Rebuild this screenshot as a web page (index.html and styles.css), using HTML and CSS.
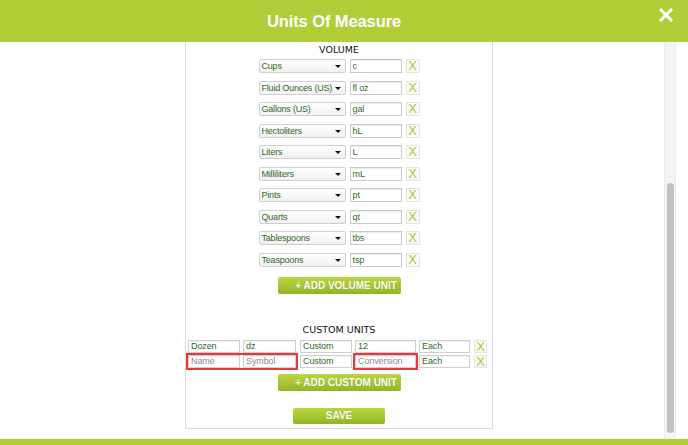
FILE: index.html
```html
<!DOCTYPE html>
<html>
<head>
<meta charset="utf-8">
<link rel="stylesheet" href="styles.css">
</head>
<body>
<header class="topbar">
  <h1 class="title">Units Of Measure</h1>
  <span class="close" aria-label="Close">
    <svg width="14" height="14" viewBox="0 0 14 14"><path d="M2 2 L12 12 M12 2 L2 12" stroke="#fff" stroke-width="3" stroke-linecap="square"/></svg>
  </span>
</header>
<main class="main">
  <section class="panel">
    <h2 class="heading vol-heading">VOLUME</h2>
    <div class="rows">
      <div class="row"><div class="select">Cups<span class="caret"></span></div><div class="input">c</div><div class="xbtn">X</div></div>
      <div class="row"><div class="select">Fluid Ounces (US)<span class="caret"></span></div><div class="input">fl oz</div><div class="xbtn">X</div></div>
      <div class="row"><div class="select">Gallons (US)<span class="caret"></span></div><div class="input">gal</div><div class="xbtn">X</div></div>
      <div class="row"><div class="select">Hectoliters<span class="caret"></span></div><div class="input">hL</div><div class="xbtn">X</div></div>
      <div class="row"><div class="select">Liters<span class="caret"></span></div><div class="input">L</div><div class="xbtn">X</div></div>
      <div class="row"><div class="select">Milliliters<span class="caret"></span></div><div class="input">mL</div><div class="xbtn">X</div></div>
      <div class="row"><div class="select">Pints<span class="caret"></span></div><div class="input">pt</div><div class="xbtn">X</div></div>
      <div class="row"><div class="select">Quarts<span class="caret"></span></div><div class="input">qt</div><div class="xbtn">X</div></div>
      <div class="row"><div class="select">Tablespoons<span class="caret"></span></div><div class="input">tbs</div><div class="xbtn">X</div></div>
      <div class="row"><div class="select">Teaspoons<span class="caret"></span></div><div class="input">tsp</div><div class="xbtn">X</div></div>
    </div>
    <div class="btn-wrap"><div class="btn btn-add">+ ADD VOLUME UNIT</div></div>
    <h2 class="heading custom-heading">CUSTOM UNITS</h2>
    <div class="crows">
      <div class="crow">
        <div class="cin w52">Dozen</div><div class="cin w53">dz</div><div class="cin w52 ml4">Custom</div><div class="cin w61">12</div><div class="cin w51">Each</div><div class="xbtn cx">X</div>
      </div>
      <div class="crow">
        <div class="mark pair"><div class="cin w52 ph">Name</div><div class="cin w53 ph">Symbol</div></div><div class="cin w52 ml4">Custom</div><div class="mark"><div class="cin w61 ph">Conversion</div></div><div class="cin w51">Each</div><div class="xbtn cx">X</div>
      </div>
    </div>
    <div class="btn-wrap cbtn"><div class="btn btn-add">+ ADD CUSTOM UNIT</div></div>
    <div class="btn-wrap sbtn"><div class="btn btn-save">SAVE</div></div>
  </section>
  <div class="track"><div class="thumb"></div></div>
</main>
<footer class="bottombar"></footer>
</body>
</html>
```
FILE: styles.css
```css
* { box-sizing: border-box; }
html, body { margin: 0; padding: 0; }
body {
  width: 688px;
  height: 445px;
  overflow: hidden;
  background: #fff;
  font-family: "Liberation Sans", Arial, sans-serif;
}
.topbar {
  height: 42px;
  background: #b1cd37;
  display: flex;
  align-items: center;
  justify-content: center;
  position: relative;
  padding-right: 20px;
}
.title {
  margin: 0;
  color: #fff;
  font-size: 16.5px;
  font-weight: bold;
  letter-spacing: -0.1px;
}
.close {
  position: absolute;
  left: 659px;
  top: 8px;
  width: 14px;
  height: 14px;
  display: block;
}
.close svg { display: block; }
.main {
  height: 397px;
  position: relative;
  overflow: hidden;
}
.panel {
  margin-left: 185px;
  width: 308px;
  height: 387px;
  border: 1px solid #dcdcdc;
  border-top: none;
  display: flex;
  flex-direction: column;
  align-items: center;
}
.heading {
  margin: 0;
  font-family: "DejaVu Sans", Verdana, sans-serif;
  font-weight: normal;
  font-size: 9.5px;
  color: #111;
  line-height: 12px;
}
.vol-heading { margin-top: 2px; }
.rows {
  margin-top: 3px;
  display: flex;
  flex-direction: column;
  gap: 7.5px;
}
.row {
  display: flex;
  align-items: center;
  height: 14px;
}
.select {
  width: 87px;
  height: 14px;
  border: 1px solid #cfcfcf;
  border-radius: 2px;
  background: linear-gradient(#ffffff, #f1f1f1);
  color: #2f6a22;
  font-size: 9px;
  letter-spacing: -0.2px;
  line-height: 12px;
  padding-left: 2px;
  position: relative;
  white-space: nowrap;
}
.caret {
  position: absolute;
  right: 4px;
  top: 5px;
  width: 0;
  height: 0;
  border-left: 3.5px solid transparent;
  border-right: 3.5px solid transparent;
  border-top: 3.5px solid #111;
}
.input {
  width: 52px;
  height: 14px;
  margin-left: 4px;
  border: 1px solid #c9c9c9;
  background: #fff;
  color: #2f6a22;
  font-size: 9px;
  letter-spacing: -0.1px;
  line-height: 12px;
  padding-left: 2px;
  box-shadow: inset 0 1px 1px rgba(0,0,0,0.08);
}
.xbtn {
  width: 14px;
  height: 14px;
  margin-left: 4px;
  border: 1px solid #e4e4e4;
  background: #fafafa;
  color: #a8c934;
  font-size: 13px;
  line-height: 12px;
  text-align: center;
}
.btn-wrap { display: flex; justify-content: center; }
.rows + .btn-wrap { margin-top: 10.5px; }
.btn {
  height: 17px;
  color: #fff;
  font-weight: bold;
  font-size: 10px;
  line-height: 17px;
  text-align: center;
  border-radius: 2px;
  background: linear-gradient(#b9d640, #a4c431 60%, #93b327);
  text-shadow: 0 0 1px rgba(60,80,0,0.4);
}
.btn-add { width: 123px; padding-left: 14px; }
.custom-heading { margin-top: 30px; }
.crows {
  margin-top: 4px;
  display: flex;
  flex-direction: column;
  gap: 2px;
  width: 300px;
  margin-left: -2px;
}
.crow {
  display: flex;
  align-items: center;
  height: 13px;
}
.cin {
  height: 13px;
  border: 1px solid #cfcfcf;
  background: #fff;
  color: #2f6a22;
  font-size: 9px;
  letter-spacing: -0.1px;
  line-height: 11px;
  padding-left: 2px;
  margin-right: 3px;
  box-shadow: inset 0 1px 1px rgba(0,0,0,0.06);
}
.cin.ph { color: #8a8a8a; }
.w52 { width: 52px; }
.w53 { width: 53px; }
.w61 { width: 61px; }
.w51 { width: 51px; }
.ml4 { margin-left: 1px; }
.cx { margin-left: 1px; width: 13px; height: 13px; line-height: 11px; }
.mark {
  display: flex;
  outline: 2px solid #e5383b;
  outline-offset: 0;
  margin-right: 3px;
}
.mark .cin:last-child { margin-right: 0; }
.pair .cin:first-child { margin-right: 3px; }
.cbtn { margin-top: 6px; }
.sbtn { margin-top: 17px; }
.btn-save { width: 92px; height: 16px; line-height: 16px; }
.track {
  position: absolute;
  left: 664px;
  top: 0;
  width: 12px;
  height: 397px;
  background: #f4f4f4;
  border-left: 1px solid #ebebeb;
  border-right: 1px solid #ebebeb;
}
.thumb {
  position: absolute;
  left: 2px;
  top: 141px;
  width: 7px;
  height: 250px;
  border-radius: 4px;
  background: #c1c1c1;
}
.bottombar {
  height: 6px;
  background: #b1cd37;
}
```
